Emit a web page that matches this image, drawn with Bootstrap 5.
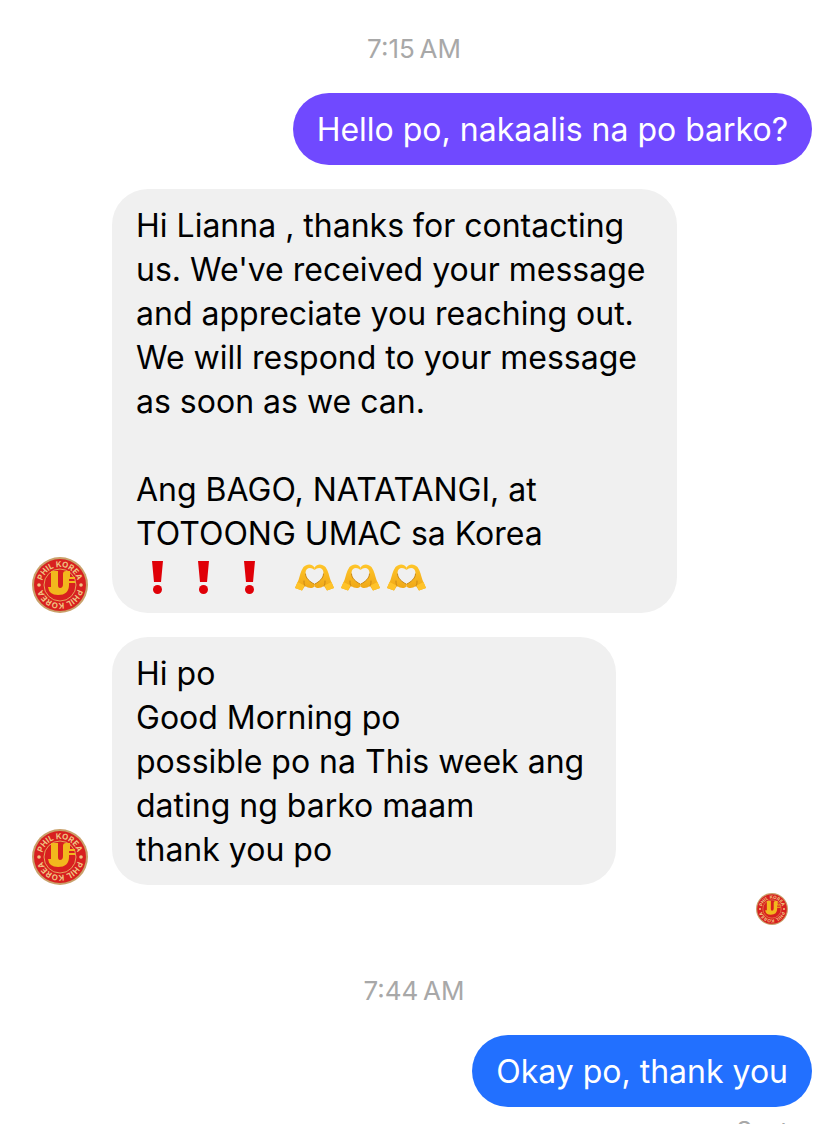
<!DOCTYPE html>
<html lang="fil">
<head>
<meta charset="utf-8">
<meta name="viewport" content="width=device-width, initial-scale=1">
<title>Phil Korea chat</title>
<link href="https://cdn.jsdelivr.net/npm/bootstrap@5.3.0/dist/css/bootstrap.min.css" rel="stylesheet">
<style>
  body { font-family: Inter, "Liberation Sans", sans-serif; background: #fff; color: #000; }
  .chat { padding: 32px 16px 0 32px; }
  .stamp { font-size: 26px; line-height: 34px; color: #a8a8a8; margin: 0 0 27px -16px; }
  .bubble { font-size: 32px; line-height: 44px; padding: 15px 24px 13px; border-radius: 36px; max-width: 100%; }
  .received { background: #f0f0f0; }
  .sent-violet { background: #7049ff; color: #fff; }
  .sent-blue { background: #2270ff; color: #fff; }
  .wide { width: 565px; }
  .medium { width: 504px; }
  .avatar { width: 56px; height: 56px; }
  .seen { width: 32px; height: 32px; }
  .seen-row { margin-bottom: 49px; }
  .emoji { width: 46px; height: 44px; }
  .status { font-size: 24px; line-height: 32px; color: #a8a8a8; }
</style>
</head>
<body class="vh-100 overflow-hidden">
<svg class="position-absolute" width="0" height="0" aria-hidden="true">
  <defs>
    <linearGradient id="skin" x1="0" y1="0" x2="0" y2="1">
      <stop offset="0" stop-color="#ffc62a"/><stop offset="1" stop-color="#eea516"/>
    </linearGradient>
    <path id="ring" d="M10 28a18 18 0 0 1 36 0"/>
  </defs>
  <symbol id="logo" viewBox="0 0 56 56">
    <circle cx="28" cy="28" r="28" fill="#c9a06a"/>
    <circle cx="28" cy="28" r="26" fill="#d8201f"/>
    <g fill="#efc583" font-family="Inter, sans-serif" font-size="8" font-weight="700">
      <text text-anchor="middle"><textPath href="#ring" startOffset="50%">PHIL KOREA</textPath></text>
      <g transform="rotate(180 28 28)"><text text-anchor="middle"><textPath href="#ring" startOffset="50%">PHIL KOREA</textPath></text></g>
      <circle cx="7" cy="28" r="1.800"/><circle cx="49" cy="28" r="1.800"/>
    </g>
    <circle cx="28" cy="28" r="16" fill="#d8201f" stroke="#e6a45c" stroke-width="1"/>
    <path fill="#f2b81d" d="M19 14h7v14q0 3 2 3 3 0 3-4V17q0-3 3-3h4v6h5v2h-6v2h6v2h-6v2q0 10-11 10-9 0-10-8h3z"/>
  </symbol>
  <symbol id="bang" viewBox="0 0 46 44">
    <path fill="#e00008" d="M16 5h11l-2 21h-7z"/><circle cx="21.500" cy="33.500" r="4.500" fill="#e00008"/>
  </symbol>
  <symbol id="hands" viewBox="0 1 46 44">
    <g id="hand">
      <path fill="url(#skin)" d="M24.500 12.500C22 8.500 17 8.500 13.500 12C10.500 16 10 21 8.500 25L5 33L12 35.500L15 31C18 32.500 21 34.500 24.500 31.500V29C20 27 15.500 23 15.500 18C15.500 12.500 21 11.500 24.500 15z"/>
      <path fill="none" stroke="#c88716" stroke-width="1" stroke-linecap="round" d="M15.500 19c0 4 4 7.500 8.500 10M15 31c-1-2-1-3-1-5"/>
      <path fill="#ffc32a" d="M7.500 27 5 33l7 2.500 2.500-5z"/>
    </g>
    <use href="#hand" transform="translate(49 0) scale(-1 1)"/>
  </symbol>
</svg>

<main class="chat d-flex flex-column">
  <time class="stamp text-center" datetime="07:15">7:15&#8239;AM</time>

  <div class="d-flex justify-content-end">
    <div class="bubble sent-violet">Hello po, nakaalis na po barko?</div>
  </div>

  <div class="d-flex align-items-end gap-4 mt-4">
    <svg class="avatar flex-shrink-0" role="img" aria-label="Phil Korea"><use href="#logo"/></svg>
    <div class="bubble received wide">
      Hi Lianna , thanks for contacting<br>us. We've received your message<br>and appreciate you reaching out.<br>We will respond to your message<br>as soon as we can.<br><br>Ang BAGO, NATATANGI, at<br>TOTOONG UMAC sa Korea
      <div class="d-flex">
        <svg class="emoji"><use href="#bang"/></svg><svg class="emoji"><use href="#bang"/></svg><svg class="emoji me-3"><use href="#bang"/></svg>
        <svg class="emoji"><use href="#hands"/></svg><svg class="emoji"><use href="#hands"/></svg><svg class="emoji"><use href="#hands"/></svg>
      </div>
    </div>
  </div>

  <div class="d-flex align-items-end gap-4 mt-4">
    <svg class="avatar flex-shrink-0" role="img" aria-label="Phil Korea"><use href="#logo"/></svg>
    <div class="bubble received medium">Hi po<br>Good Morning po<br>possible po na This week ang<br>dating ng barko maam<br>thank you po</div>
  </div>

  <div class="seen-row d-flex justify-content-end mt-2 pe-4">
    <svg class="seen" role="img" aria-label="Seen by Phil Korea"><use href="#logo"/></svg>
  </div>

  <time class="stamp text-center" datetime="07:44">7:44&#8239;AM</time>

  <div class="d-flex justify-content-end">
    <div class="bubble sent-blue">Okay po, thank you</div>
  </div>
  <div class="status text-end pe-4 mt-2">Sent</div>
</main>
<script src="https://cdn.jsdelivr.net/npm/bootstrap@5.3.0/dist/js/bootstrap.bundle.min.js"></script>
</body>
</html>
